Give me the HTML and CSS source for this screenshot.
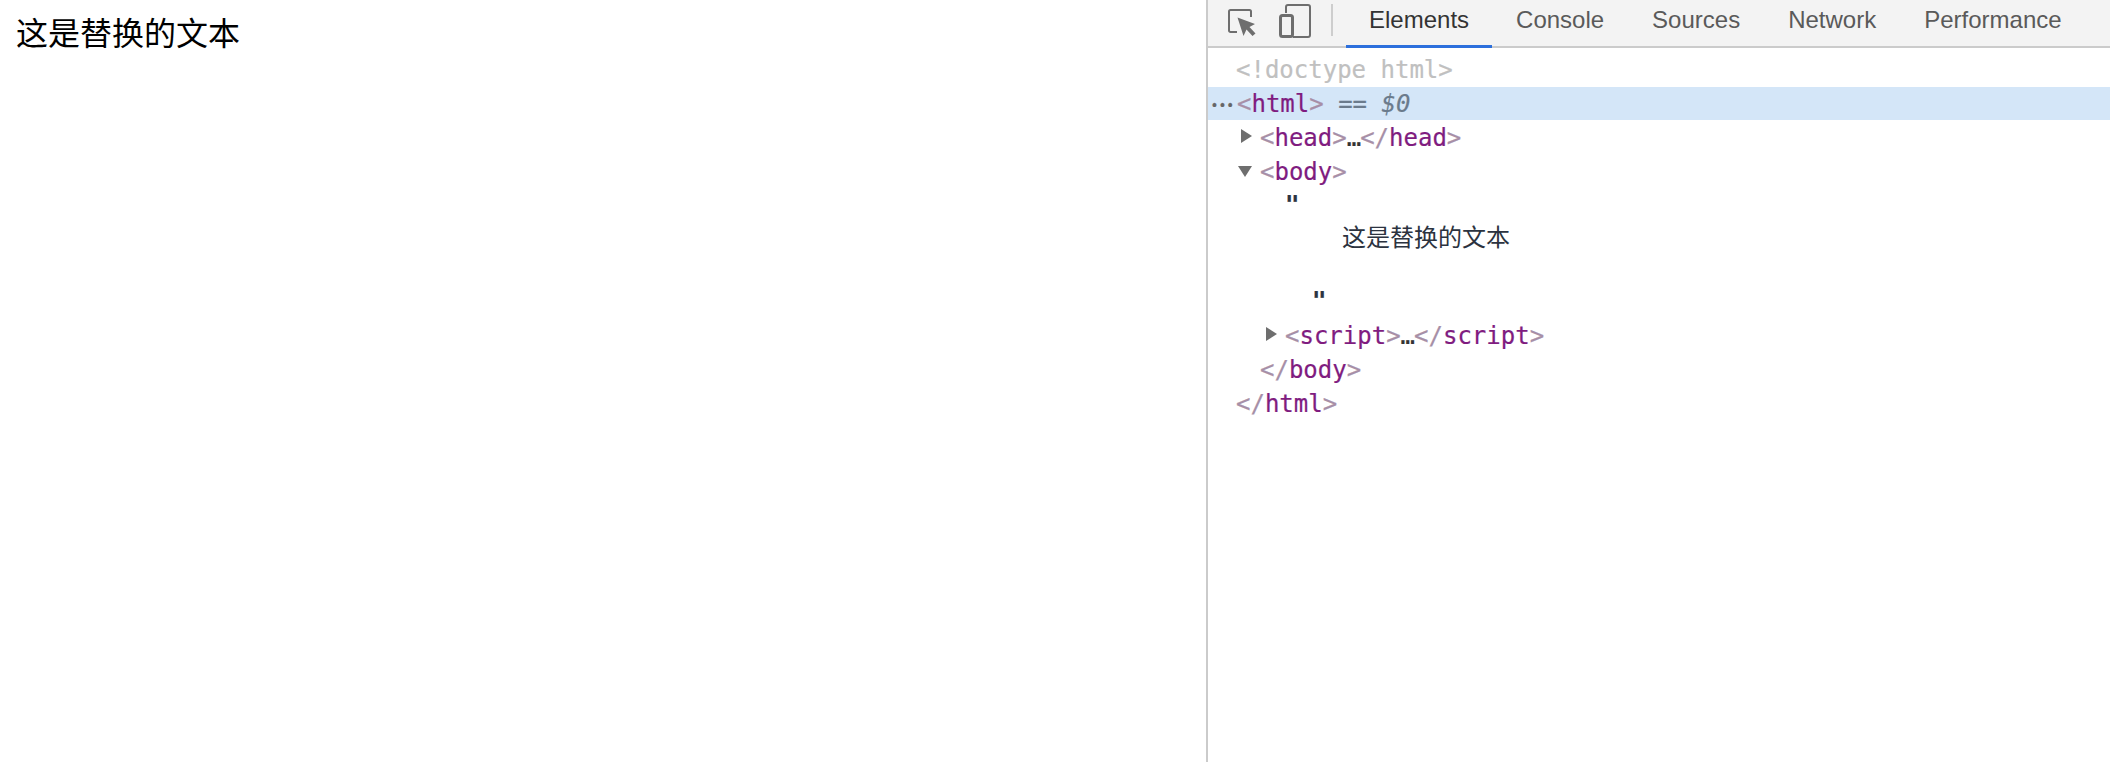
FILE: index.html
```html
<!DOCTYPE html>
<html lang="zh">
<head>
<meta charset="utf-8">
<title>这是替换的文本</title>
<link rel="stylesheet" href="styles.css">
</head>
<body>
<main class="page">这是替换的文本</main>
<section class="devtools">
  <header class="toolbar">
    <div class="tools">
      <svg class="icon-inspect" width="30" height="30" viewBox="0 0 30 30"><path d="M10 25H3.5a1.5 1.5 0 0 1-1.500-1.500V4.500A1.500 1.500 0 0 1 3.500 3h19A1.500 1.500 0 0 1 24 4.500V10" fill="none" stroke="#6e6e6e" stroke-width="2"/><path d="M10.500 10.500 L28 17 L22.500 20 L28.500 26.500 L25.500 29 L19.500 22.500 L16.500 29 Z" fill="#6e6e6e"/></svg>
      <svg class="icon-device" width="32" height="34" viewBox="0 0 32 34"><path d="M7 9V3a2 2 0 0 1 2-2h20a2 2 0 0 1 2 2v28a2 2 0 0 1-2 2H14" fill="none" stroke="#6e6e6e" stroke-width="2"/><rect x="1.500" y="11.500" width="12" height="21" rx="2" fill="none" stroke="#6e6e6e" stroke-width="3"/></svg>
      <span class="divider"></span>
    </div>
    <nav class="tabs">
      <span class="tab active">Elements</span>
      <span class="tab">Console</span>
      <span class="tab">Sources</span>
      <span class="tab">Network</span>
      <span class="tab">Performance</span>
    </nav>
  </header>
  <div class="tree">
    <div class="row lvl0 doctype">&lt;!doctype html&gt;</div>
    <div class="row lvl0 selected"><span class="dots">•••</span><span class="b">&lt;</span><span class="t">html</span><span class="b">&gt;</span> <span class="eq">== <i>$0</i></span></div>
    <div class="row lvl1"><span class="arrow right"></span><span class="b">&lt;</span><span class="t">head</span><span class="b">&gt;</span><span class="ell">…</span><span class="b">&lt;/</span><span class="t">head</span><span class="b">&gt;</span></div>
    <div class="row lvl1"><span class="arrow down"></span><span class="b">&lt;</span><span class="t">body</span><span class="b">&gt;</span></div>
    <div class="row lvl2 quote">"</div>
    <div class="row lvl3 cjk">这是替换的文本</div>
    <div class="row lvl4 quote close">"</div>
    <div class="row lvl2 script"><span class="arrow right"></span><span class="b">&lt;</span><span class="t">script</span><span class="b">&gt;</span><span class="ell">…</span><span class="b">&lt;/</span><span class="t">script</span><span class="b">&gt;</span></div>
    <div class="row lvl1"><span class="b">&lt;/</span><span class="t">body</span><span class="b">&gt;</span></div>
    <div class="row lvl0"><span class="b">&lt;/</span><span class="t">html</span><span class="b">&gt;</span></div>
  </div>
</section>
</body>
</html>
```

FILE: styles.css
```css
* { box-sizing: border-box; }
html, body { margin: 0; height: 100%; }
body {
  display: flex;
  width: 2110px;
  height: 762px;
  overflow: hidden;
  background: #fff;
}
.page {
  width: 1206px;
  flex: none;
  padding: 13px 16px;
  font: 32px/36px "Noto Sans CJK SC", "Liberation Sans", sans-serif;
  color: #000;
}
.devtools {
  flex: 1;
  border-left: 2px solid #cbcbcb;
  display: flex;
  flex-direction: column;
  min-width: 0;
}
.toolbar {
  height: 48px;
  flex: none;
  display: flex;
  background: #f3f3f3;
  border-bottom: 2px solid #cbcbcb;
}
.tools {
  display: flex;
  align-items: flex-start;
  padding-left: 19px;
  width: 138px;
  flex: none;
}
.icon-inspect { margin-top: 7px; }
.icon-device { margin: 4px 0 0 22px; }
.divider {
  width: 2px;
  height: 32px;
  margin: 4px 0 0 20px;
  background: #cdcdcd;
}
.tabs { display: flex; font: 24px/36px "Liberation Sans", Arial, sans-serif; color: #5a5a5a; }
.tab { padding: 2px 24px 0; height: 48px; }
.tab.active {
  padding: 2px 23px 0;
  color: #333;
  border-bottom: 3px solid #2c6fdc;
}
.tree {
  padding-top: 5px;
  font: 24px/36px "DejaVu Sans Mono", monospace;
  color: #2c3340;
  -webkit-text-stroke: 0.2px currentColor;
}
.row { height: 34px; white-space: pre; position: relative; }
.lvl0 { padding-left: 28px; }
.lvl1 { padding-left: 52px; }
.lvl2 { padding-left: 77px; }
.lvl3 { padding-left: 134px; }
.lvl4 { padding-left: 104px; }
.doctype { height: 33.500px; line-height: 34px; color: #c0c0c0; }
.selected { background: #d4e6f8; height: 33px; line-height: 34px; padding-left: 29px; }
.b { color: #a78fa7; }
.t { color: #801c80; }
.eq { color: #6b7b8c; }
.eq i { font-family: "DejaVu Sans Mono", monospace; }
.ell { color: #333; letter-spacing: -1px; }
.dots {
  position: absolute;
  left: 4px;
  top: 1px;
  font: 14px/34px "Liberation Sans", sans-serif;
  letter-spacing: 3px;
  color: #666;
}
.arrow {
  position: absolute;
  width: 0;
  height: 0;
  border-style: solid;
  border-color: transparent;
}
.arrow.right {
  margin-left: -19px;
  margin-top: 9px;
  border-width: 7px 0 7px 11px;
  border-left-color: #6e6e6e;
}
.arrow.down {
  margin-left: -22px;
  margin-top: 12px;
  border-width: 11px 7px 0;
  border-top-color: #6e6e6e;
}
.quote { height: 31px; line-height: 35px; font-weight: 700; }
.cjk {
  height: 60px;
  font: 24px/34px "Noto Sans CJK SC", sans-serif;
  -webkit-text-stroke: 0;
}
.close { height: 39px; line-height: 44px; }
```
